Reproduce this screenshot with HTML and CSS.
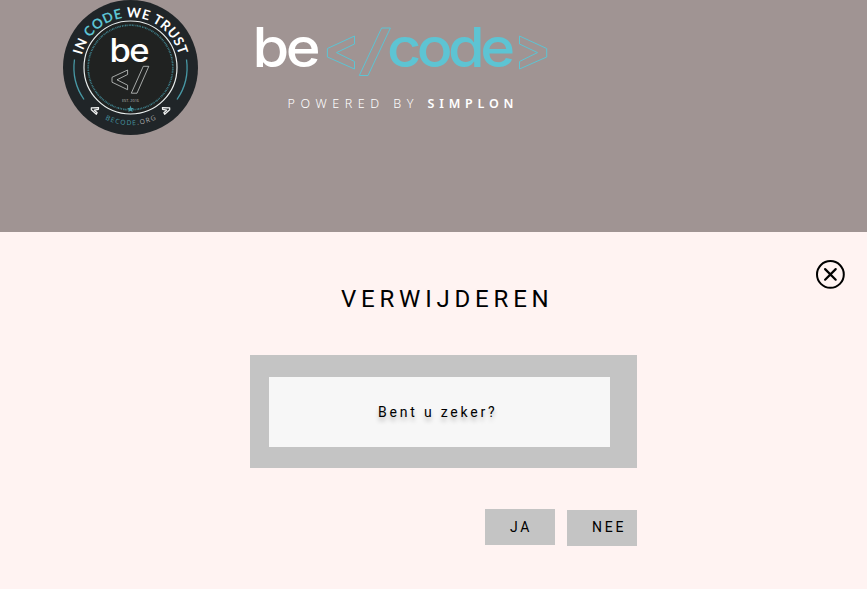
FILE: index.html
```html
<!DOCTYPE html>
<html lang="nl">
<head>
<meta charset="utf-8">
<title>Verwijderen</title>
<link rel="stylesheet" href="styles.css">
</head>
<body>
<header class="header">
  <svg class="badge" width="136" height="136" viewBox="63 0 136 136">
    <defs>
      <path id="top" d="M80.3 67.5a50.2 50.2 0 0 1 100.4 0"/>
      <path id="bottom" d="M72.8 67.5a57.7 57.7 0 0 0 115.4 0"/>
    </defs>
    <circle cx="130.5" cy="67.5" r="67.5" fill="#202528"/>
    <circle cx="130.5" cy="67.5" r="46.5" fill="#202221" stroke="#e9eeee" stroke-width="1.2"/>
    <g fill="none" stroke="#4798a5" stroke-width="1.3">
      <path d="M74.5 59.5A56.5 56.5 0 0 0 84 99.5"/>
      <path d="M186.5 59.5A56.5 56.5 0 0 1 177 99.5"/>
    </g>
    <text class="motto"><textPath href="#top" startOffset="50%" text-anchor="middle" textLength="132">IN <tspan class="teal">CODE</tspan> WE TRUST</textPath></text>
    <circle cx="130.5" cy="67.5" r="42.3" fill="none" stroke="#3d7c87" stroke-width="1.7" stroke-dasharray="1 .6 .8 .7 1.2 .5 .9 1.1"/>
    <path d="M130.5 105.5l.9 2.4 2.6.1-2 1.6.7 2.5-2.2-1.4-2.2 1.4.7-2.5-2-1.6 2.6-.1z" fill="#4798a5"/>
    <text class="word small" transform="translate(109.6 62.2) scale(1.08 1)">be</text>
    <g fill="none" stroke="#c9cdcc" stroke-width=".8">
      <path d="M127.6 70L112 77.3V82.2L127.6 89.7V85.2L117 79.8 127.6 74.5z"/>
      <path d="M143.3 66.3H148.8L137 93.2H131.3z"/>
    </g>
    <text class="est" x="122" y="101.5" textLength="17" lengthAdjust="spacingAndGlyphs">EST. 2016</text>
    <g fill="none" stroke="#f1f3f3" stroke-width="1.2" stroke-linejoin="round">
      <path d="M98.6 107.6L91.3 107.8 91.3 109.8 96.3 114.3 97.2 112.8 94.3 110.2 98.4 109.4z"/>
      <path d="M162.4 107.6L169.7 107.8 169.7 109.8 164.7 114.3 163.8 112.8 166.7 110.2 162.6 109.4z"/>
    </g>
    <text class="site"><textPath href="#bottom" startOffset="50%" text-anchor="middle" textLength="53">BECODE<tspan fill="#aaa">.ORG</tspan></textPath></text>
  </svg>
  <svg class="wordmark" width="310" height="105" viewBox="247 10 310 105">
    <text class="word large" transform="translate(252.6 66.8) scale(1.08 1)">be</text>
    <text class="word large teal" transform="translate(387 66.8) scale(1.08 1)">code</text>
    <g class="outline">
      <path d="M354.5 36L327.4 48.5V57L354.5 69V61.5L336.5 52.6 354.5 44z"/>
      <path d="M381.6 28H390.4L368 75.5H359.3z"/>
      <path d="M519.5 36L546.7 48.5V57L519.5 69V61.5L537.5 52.6 519.5 44z"/>
    </g>
    <text class="powered" x="287.5" y="108" textLength="126">POWERED BY</text>
    <text class="powered strong" x="427.5" y="108" textLength="86">SIMPLON</text>
  </svg>
</header>
<main class="dialog">
  <button class="close" aria-label="Sluiten">
    <svg width="30" height="30" viewBox="0 0 30 30" fill="none" stroke="#000" stroke-width="2"><circle cx="15.4" cy="14.4" r="13.4"/><path d="M10.1 9.1L20.7 19.7M20.7 9.1L10.1 19.7" stroke-width="2.2" stroke-linecap="round"/></svg>
  </button>
  <h1 class="title">VERWIJDEREN</h1>
  <div class="panel"><p class="question">Bent u zeker?</p></div>
  <div class="actions">
    <button class="button">JA</button>
    <button class="button no">NEE</button>
  </div>
</main>
</body>
</html>
```
FILE: styles.css
```css
* { box-sizing: border-box; }
body { margin: 0; background: #fff3f2; font-family: Roboto, sans-serif; color: #000; }
.header { height: 232px; background: #a09493; display: flex; align-items: flex-start; padding-left: 63px; }
.wordmark { margin: 10px 0 0 48px; }
svg { display: block; }
.word { font-family: Inter, sans-serif; font-weight: 500; fill: #fff; }
.large { font-size: 55px; letter-spacing: -3.2px; }
.large.teal { letter-spacing: -4.2px; }
.small { font-size: 32px; letter-spacing: -1.6px; }
.teal, .word.teal { fill: #5dc4d3; }
.motto { font: 700 13.5px Lato, sans-serif; fill: #fff; }
.est { font: 4px "Open Sans", sans-serif; fill: #bbb; }
.site { font: 6.7px "Open Sans", sans-serif; fill: #4798a5; }
.outline { fill: none; stroke: #5dc4d3; stroke-width: 1; }
.powered { font: 300 12.5px "Noto Sans", sans-serif; fill: #fff; }
.strong { font-weight: 600; }
.dialog { position: relative; height: 357px; padding-top: 50px; }
.close { position: absolute; top: 28px; right: 22px; padding: 0; border: 0; background: none; }
.title { margin: 0 0 0 341px; font-size: 24px; font-weight: 400; line-height: 34px; letter-spacing: 4.8px; }
.panel { width: 387px; height: 113px; margin: 39px 0 0 250px; padding: 22px 27px 21px 19px; background: #c4c4c4; }
.question { height: 70px; margin: 0; padding-left: 109px; background: #f7f7f7; font-size: 14px; line-height: 70px; letter-spacing: 2.8px; text-shadow: 0 4px 4px rgba(0, 0, 0, .25); }
.actions { display: flex; gap: 12px; margin: 41px 0 0 485px; }
.button { width: 70px; height: 36px; padding: 0 0 0 25px; border: 0; background: #c4c4c4; color: #000; font: 14px Roboto, sans-serif; letter-spacing: 2.8px; text-align: left; }
.no { margin-top: 1px; padding-bottom: 2px; }
```
